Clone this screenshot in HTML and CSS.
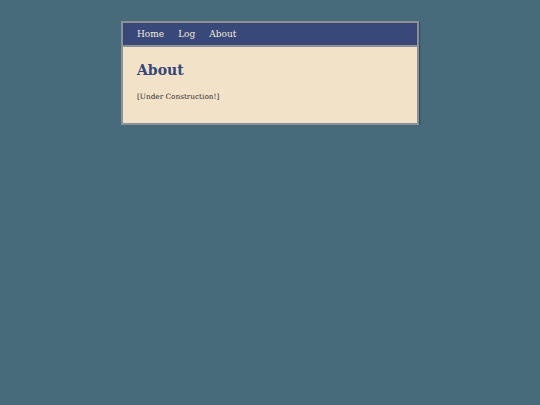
FILE: index.html
```html
<!DOCTYPE html>
<html>
<head>
<meta charset="utf-8">
<link rel="stylesheet" href="styles.css">
</head>
<body>
<div class="page">
  <nav class="nav">
    <a href="#">Home</a>
    <a href="#">Log</a>
    <a href="#">About</a>
  </nav>
  <main class="content">
    <h1 class="title">About</h1>
    <p class="text">[Under Construction!]</p>
  </main>
</div>
</body>
</html>
```
FILE: styles.css
```css
html, body {
  margin: 0;
  padding: 0;
  background: #476b7b;
  font-family: "DejaVu Serif", "Liberation Serif", serif;
}
.page {
  width: 294px;
  margin: 21px 0 0 121px;
  border: 2px solid #8c9196;
  box-shadow: 1px 1px 1px rgba(0,0,0,0.25);
}
.nav {
  display: flex;
  gap: 14px;
  height: 22px;
  align-items: center;
  padding: 0 14px;
  background: #384878;
  border-bottom: 2px solid #8c9196;
}
.nav a {
  color: #f2ecde;
  text-decoration: none;
  font-size: 9px;
}
.content {
  background: #f2e3c8;
  padding: 13px 14px 21px;
}
.title {
  margin: 0 0 12px;
  font-size: 14px;
  line-height: 20px;
  font-weight: bold;
  color: #37467a;
}
.text {
  margin: 0;
  font-size: 7.3px;
  line-height: 10px;
  color: #2a2a30;
}
```
